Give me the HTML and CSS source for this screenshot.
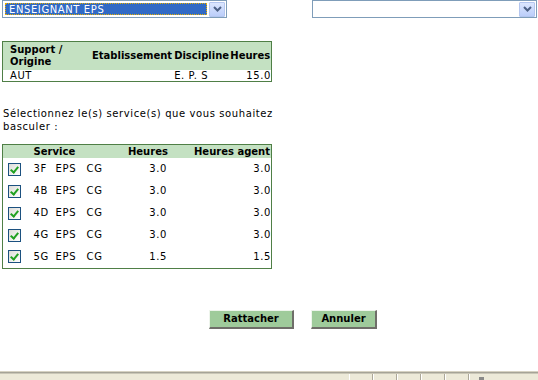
FILE: index.html
```html
<!DOCTYPE html>
<html lang="fr">
<head>
<meta charset="UTF-8">
<title>Rattachement de services</title>
<link rel="stylesheet" href="styles.css">
</head>
<body>
<div class="page">
	<div class="topbar">
		<div class="combo combo-main">
			<span class="combo-value">ENSEIGNANT EPS</span>
			<span class="combo-arrow"><svg width="9" height="6" viewBox="0 0 9 6"><path d="M1 1 L4.5 4.5 L8 1" fill="none" stroke="#4d6185" stroke-width="2"/></svg></span>
		</div>
		<div class="combo combo-other">
			<span class="combo-value empty"></span>
			<span class="combo-arrow"><svg width="9" height="6" viewBox="0 0 9 6"><path d="M1 1 L4.5 4.5 L8 1" fill="none" stroke="#4d6185" stroke-width="2"/></svg></span>
		</div>
	</div>

	<div class="content">
		<table class="grid recap">
			<colgroup>
				<col class="c-origine">
				<col class="c-etab">
				<col class="c-disc">
				<col class="c-heures">
			</colgroup>
			<tr class="head">
				<th class="left">Support /<br>Origine</th>
				<th>Etablissement</th>
				<th>Discipline</th>
				<th>Heures</th>
			</tr>
			<tr>
				<td class="left">AUT</td>
				<td></td>
				<td class="disc">E. P. S</td>
				<td class="num">15.0</td>
			</tr>
		</table>

		<p class="intro">Sélectionnez le(s) service(s) que vous souhaitez basculer :</p>

		<table class="grid services">
			<colgroup>
				<col class="c-check">
				<col class="c-service">
				<col class="c-h">
				<col class="c-ha">
			</colgroup>
			<tr class="head">
				<th></th>
				<th class="left">Service</th>
				<th>Heures</th>
				<th>Heures agent</th>
			</tr>
			<tr>
				<td><span class="check"></span></td>
				<td class="svc"><span class="div">3F</span><span class="mat">EPS</span><span>CG</span></td>
				<td class="num">3.0</td>
				<td class="num">3.0</td>
			</tr>
			<tr>
				<td><span class="check"></span></td>
				<td class="svc"><span class="div">4B</span><span class="mat">EPS</span><span>CG</span></td>
				<td class="num">3.0</td>
				<td class="num">3.0</td>
			</tr>
			<tr>
				<td><span class="check"></span></td>
				<td class="svc"><span class="div">4D</span><span class="mat">EPS</span><span>CG</span></td>
				<td class="num">3.0</td>
				<td class="num">3.0</td>
			</tr>
			<tr>
				<td><span class="check"></span></td>
				<td class="svc"><span class="div">4G</span><span class="mat">EPS</span><span>CG</span></td>
				<td class="num">3.0</td>
				<td class="num">3.0</td>
			</tr>
			<tr>
				<td><span class="check"></span></td>
				<td class="svc"><span class="div">5G</span><span class="mat">EPS</span><span>CG</span></td>
				<td class="num">1.5</td>
				<td class="num">1.5</td>
			</tr>
		</table>

		<div class="actions">
			<button class="btn btn-ok">Rattacher</button>
			<button class="btn btn-cancel">Annuler</button>
		</div>
	</div>

	<div class="statusbar">
		<span class="sb-main"></span>
		<span class="sb-cell"></span>
		<span class="sb-cell"></span>
		<span class="sb-cell"></span>
		<span class="sb-cell"></span>
		<span class="sb-cell"></span>
		<span class="sb-cell last"><span class="sb-icon"></span></span>
	</div>
</div>
</body>
</html>
```

FILE: styles.css
```css
body {
	margin: 0;
	background-color: #fff;
	font-family: "DejaVu Sans", Verdana, sans-serif;
	font-size: 10px;
	letter-spacing: 0.6px;
	color: #000;
}

.page {
	height: 380px;
	display: flex;
	flex-direction: column;
}

/* combos en haut */
.topbar {
	display: flex;
	justify-content: space-between;
	padding: 0 1px 0 2px;
	height: 18px;
}

.combo {
	box-sizing: border-box;
	height: 18px;
	border: 1px solid #7f9db9;
	background: #fff;
	display: flex;
	align-items: center;
	padding: 0 1px 0 2px;
	gap: 2px;
}

.combo-main {
	width: 225px;
}

.combo-other {
	width: 225px;
}

.combo-value {
	flex: 1;
	height: 12px;
	line-height: 11px;
	background: #316ac5;
	color: #fff;
	padding-left: 3px;
	outline: 1px dotted #e8b000;
	outline-offset: -1px;
	border: 1px dotted #000;
	box-sizing: border-box;
	white-space: nowrap;
	overflow: hidden;
}

.combo-value.empty {
	background: #fff;
	border: none;
	outline: none;
}

.combo-arrow {
	box-sizing: border-box;
	width: 16px;
	height: 15px;
	border: 1px solid #b4c6ef;
	border-radius: 1px;
	background: linear-gradient(#dbe6fe, #bccefa);
	display: flex;
	align-items: center;
	justify-content: center;
}

.content {
	margin-left: 2px;
}

/* tableaux */
table.grid {
	border-collapse: collapse;
	table-layout: fixed;
	width: 270px;
	border: 1px solid #4f7f46;
	font-size: 10px;
}

table.grid th {
	background: #c4e1c2;
	font-weight: bold;
	letter-spacing: 0;
	text-align: right;
	vertical-align: middle;
	padding: 0 1px;
	white-space: nowrap;
}

table.grid td {
	padding: 0 1px;
	white-space: nowrap;
}

table.grid .left {
	text-align: left;
}

table.grid .num {
	text-align: right;
	padding-right: 0;
}

.recap {
	margin-top: 23px;
}

.recap .head th {
	height: 28px;
	line-height: 12px;
}

.recap td {
	height: 11px;
	line-height: 11px;
}

.recap .left {
	padding-left: 7px;
}

.recap .c-origine { width: 88px; }
.recap .c-etab { width: 82px; }
.recap .c-disc { width: 56px; }
.recap .c-heures { width: 42px; }

.intro {
	margin: 25px 0 11px 1px;
	width: 280px;
	line-height: 13px;
}

.services .head th {
	height: 13px;
	line-height: 13px;
}

.services tr:not(.head) {
	height: 22px;
}

.services td {
	box-sizing: border-box;
	height: 22px;
	line-height: 12px;
	vertical-align: middle;
	padding-top: 4px;
	padding-bottom: 0;
}

.services .c-check { width: 28px; }
.services .c-service { width: 96px; }
.services .c-h { width: 40px; }
.services .c-ha { width: 104px; }

.services th.left {
	padding-left: 3px;
}

.svc {
	padding-left: 3px !important;
}

.svc .div {
	display: inline-block;
	width: 22px;
}

.svc .mat {
	display: inline-block;
	width: 31px;
}

.check {
	display: block;
	box-sizing: border-box;
	width: 13px;
	height: 13px;
	margin-left: 4px;
	border: 1px solid #1c5180;
	background: linear-gradient(135deg, #dcdcd7, #fff);
	position: relative;
}

.check::after {
	content: "";
	position: absolute;
	left: 3px;
	top: 1px;
	width: 3px;
	height: 6px;
	border: solid #21a121;
	border-width: 0 2px 2px 0;
	transform: rotate(40deg);
}

/* boutons */
.actions {
	display: flex;
	gap: 17px;
	margin: 41px 0 0 207px;
}

.btn {
	box-sizing: border-box;
	height: 19px;
	padding: 0;
	font-family: "DejaVu Sans", Verdana, sans-serif;
	font-size: 10px;
	font-weight: bold;
	color: #000;
	background: #9fcb9b;
	border-style: solid;
	border-width: 1px 2px 2px 1px;
	border-color: #eef5ec #6f6e69 #6f6e69 #eef5ec;
}

.btn-ok { width: 85px; }
.btn-cancel { width: 66px; }

/* barre d'etat du navigateur */
.statusbar {
	margin-top: auto;
	height: 9px;
	box-sizing: border-box;
	background: #ece9d8;
	border-top: 1px solid #d6d2c2;
	box-shadow: inset 0 1px 0 #a5a397, inset 0 2px 0 #c9c6b6;
	display: flex;
}

.sb-main {
	width: 349px;
}

.sb-cell {
	width: 22px;
	border-left: 1px solid #fff;
	border-right: 1px solid #aca899;
	margin-top: 2px;
}

.sb-cell.last {
	flex: 1;
	border-right: none;
	position: relative;
}

.sb-icon {
	position: absolute;
	left: 9px;
	top: 3px;
	width: 5px;
	height: 4px;
	background: #8a8a88;
}
```
